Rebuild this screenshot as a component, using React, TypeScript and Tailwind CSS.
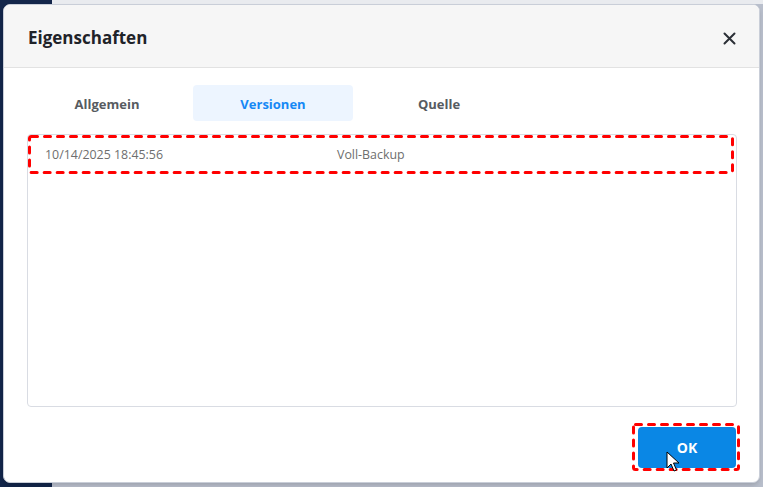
import React from 'react';

function DashedOutline({ className }: { className: string }) {
  // red dashed annotation drawn over the highlighted element
  return (
    <svg className={'pointer-events-none absolute overflow-visible ' + className}>
      <rect
        x="1.5"
        y="1.5"
        width="calc(100% - 3px)"
        height="calc(100% - 3px)"
        rx="2"
        fill="none"
        stroke="#ff0000"
        strokeWidth="3"
        strokeDasharray="6 7"
        strokeLinecap="round"
      />
    </svg>
  );
}

function Cursor() {
  return (
    <svg className="pointer-events-none absolute left-[28px] top-[24px]" width="14" height="22" viewBox="0 0 14 22">
      <path
        d="M1 1 L1 17 L5 13 L8 20 L10.5 19 L7.5 12 L13 12 Z"
        fill="#ffffff"
        stroke="#000000"
        strokeWidth="1"
        strokeLinejoin="round"
      />
    </svg>
  );
}

const tabs = ['Allgemein', 'Versionen', 'Quelle'];

export default function App() {
  const active = 'Versionen';

  return (
    <div
      className="relative h-[487px] w-[763px] overflow-hidden bg-[#b9bfcc]"
      style={{ fontFamily: '"Open Sans", "Noto Sans", sans-serif' }}
    >
      {/* background app behind the dialog */}
      <div className="absolute left-0 top-0 h-full w-[52px] bg-[#13264a]" />
      <div className="absolute left-[52px] top-0 h-[4px] w-full bg-[#e9ebef]" />

      {/* Dialog */}
      <div className="relative ml-[3px] mt-[4px] flex h-[479px] w-[757px] flex-col overflow-hidden rounded-[7px] border border-[#c9ced8] bg-white shadow-md">
        {/* Header */}
        <div className="flex h-[63px] shrink-0 items-center justify-between border-b border-[#e2e2e2] bg-[#f6f6f6] pl-[24px] pr-[20px] pt-[4px]">
          <h1 className="text-[17px] font-bold text-[#1f2329]">Eigenschaften</h1>
          <button className="flex h-5 w-5 items-center justify-center text-[#2b2f36]">
            <svg width="13" height="13" viewBox="0 0 13 13">
              <path d="M1.5 1.5 L11.5 11.5 M11.5 1.5 L1.5 11.5" stroke="currentColor" strokeWidth="2" strokeLinecap="round" />
            </svg>
          </button>
        </div>

        {/* Body */}
        <div className="flex flex-1 flex-col px-[23px] pt-[17px]">
          <div className="flex gap-[6px]">
            {tabs.map((t) => (
              <div
                key={t}
                className={
                  t === active
                    ? 'flex h-[36px] w-[160px] items-center justify-center rounded-[4px] bg-[#edf5ff] pt-[3px] text-[13px] font-bold text-[#1688f5]'
                    : 'flex h-[36px] w-[160px] items-center justify-center rounded-[4px] pt-[3px] text-[13px] font-bold text-[#575b61]'
                }
              >
                {t}
              </div>
            ))}
          </div>

          <div className="mt-[13px] h-[273px] w-[710px] rounded-[4px] border border-[#d9dce3] bg-white">
            <div className="relative flex h-[38px] items-center pt-[2px] text-[12.4px] text-[#6e6e6e]">
              <span className="w-[309px] pl-[17px]">10/14/2025 18:45:56</span>
              <span>Voll-Backup</span>
              <DashedOutline className="left-0 top-0 h-[39px] w-[706px]" />
            </div>
          </div>

          <div className="mt-[20px] flex justify-end">
            <div className="relative">
              <button className="flex h-[41px] w-[98px] items-center justify-center rounded-[4px] bg-[#0a87e5] text-[14px] font-bold text-white">
                OK
              </button>
              <DashedOutline className="-left-[6px] -top-[4px] h-[48px] w-[108px]" />
              <Cursor />
            </div>
          </div>
        </div>
      </div>
    </div>
  );
}
